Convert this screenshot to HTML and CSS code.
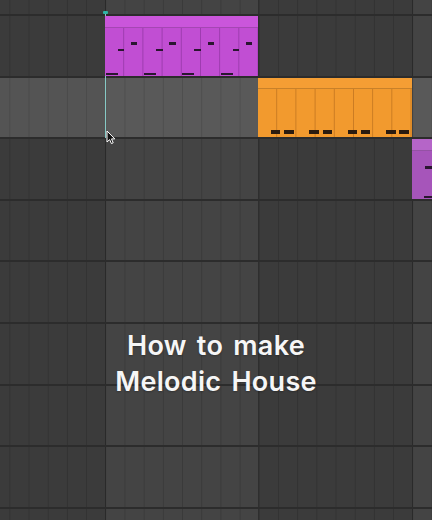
FILE: index.html
```html
<!DOCTYPE html>
<html lang="en">
<head>
    <meta charset="UTF-8">
    <meta name="viewport" content="width=device-width, initial-scale=1.0">
    <title>Melodic House</title>
    <link rel="stylesheet" href="styles.css">
</head>
<body>
    <main class="arrange">
        <div class="track track-top"></div>

        <div class="track">
            <div class="clip clip-purple slot-2">
                <div class="clip-head"></div>
                <div class="clip-body">
                    <div class="pair"><span class="note note-low"></span><span class="note note-mid"></span><span class="note note-high"></span></div>
                    <div class="pair"><span class="note note-low"></span><span class="note note-mid"></span><span class="note note-high"></span></div>
                    <div class="pair"><span class="note note-low"></span><span class="note note-mid"></span><span class="note note-high"></span></div>
                    <div class="pair"><span class="note note-low"></span><span class="note note-mid"></span><span class="note note-high"></span></div>
                </div>
            </div>
        </div>

        <div class="track track-selected">
            <div class="clip clip-orange slot-3">
                <div class="clip-head"></div>
                <div class="clip-body">
                    <div class="pair"><span class="note note-a"></span><span class="note note-b"></span></div>
                    <div class="pair"><span class="note note-a"></span><span class="note note-b"></span></div>
                    <div class="pair"><span class="note note-a"></span><span class="note note-b"></span></div>
                    <div class="pair"><span class="note note-a"></span><span class="note note-b"></span></div>
                </div>
            </div>
        </div>

        <div class="track">
            <div class="clip clip-violet slot-4">
                <div class="clip-head"></div>
                <div class="clip-body">
                    <div class="pair"><span class="note note-top"></span><span class="note note-foot"></span></div>
                </div>
            </div>
        </div>

        <div class="track"></div>
        <div class="track"></div>
        <div class="track"></div>
        <div class="track"></div>
        <div class="track"></div>
        <div class="track"></div>

        <!-- playhead + mouse pointer sit over the tracks -->
        <div class="playhead"></div>
        <div class="playhead-mark"></div>
        <svg class="pointer" width="10" height="15" viewBox="0 0 10 15">
            <path d="M1 1 L1 12 L3.6 9.6 L5.4 13.6 L7.2 12.8 L5.5 8.9 L8.8 8.9 Z" fill="#111" stroke="#fff" stroke-width="1" stroke-linejoin="round"/>
        </svg>

        <h1 class="title">How to make<br>Melodic House</h1>
    </main>
</body>
</html>
```

FILE: styles.css
```css
body {
    margin: 0;
    padding: 0;
    background-color: #3c3c3c;
    font-family: 'Inter', 'Liberation Sans', sans-serif;
}

.arrange {
    position: relative;
    width: 432px;
    height: 520px;
    overflow: hidden;
    display: flex;
    flex-direction: column;
}

/* one lane of the arrangement; beat lines every 19.19px, 2-bar shading */
.track {
    flex: none;
    height: 59.6px;
    border-bottom: 2px solid #2c2c2c;
    display: grid;
    grid-template-columns: 105.3px 153px 154px 1fr;
    background-image:
        linear-gradient(to right, rgba(0, 0, 0, 0.15) 0 1px, transparent 1px),
        linear-gradient(to right,
            #3b3b3b 0 104.8px, #2f2f2f 104.8px 105.8px,
            #444444 105.8px 257.8px, #2f2f2f 257.8px 258.8px,
            #3b3b3b 258.8px 411.8px, #2f2f2f 411.8px 412.8px,
            #444444 412.8px);
    background-size: 19.19px 100%, 100% 100%;
    background-position: 9.35px 0, 0 0;
    background-repeat: repeat-x, no-repeat;
}

.track-top {
    height: 14px;
}

.track-selected {
    background-image:
        linear-gradient(to right, rgba(0, 0, 0, 0.12) 0 1px, transparent 1px),
        linear-gradient(to right,
            #545454 0 104.8px, #4a4a4a 104.8px 105.8px,
            #595959 105.8px 257.8px, #4a4a4a 257.8px 258.8px,
            #545454 258.8px 411.8px, #4a4a4a 411.8px 412.8px,
            #595959 412.8px);
}

.slot-2 { grid-column: 2; }
.slot-3 { grid-column: 3; }
.slot-4 { grid-column: 4; }

.clip {
    position: relative;
    z-index: 2;
    display: flex;
    flex-direction: column;
}

.clip-head {
    height: 10.5px;
    border-bottom: 1px solid rgba(0, 0, 0, 0.18);
}

.clip-body {
    flex: 1;
    display: grid;
    grid-template-columns: repeat(4, 38.38px);
    background-size: 19.19px 100%;
    background-repeat: repeat-x;
}

.pair {
    position: relative;
}

.note {
    position: absolute;
    display: block;
}

.clip-purple .clip-head { background-color: #ca56db; }
.clip-purple .clip-body {
    background-color: #c14ed3;
    background-image: linear-gradient(to right, transparent 0 calc(100% - 1px), #9c3bae calc(100% - 1px));
}
.clip-purple .note { background-color: #2a1630; height: 2.4px; }
.note-low { left: 0.4px; bottom: 0.5px; width: 12px; }
.note-mid { left: 12.4px; top: 21.3px; width: 6.6px; }
.note-high { left: 25.7px; top: 14.7px; width: 6.3px; }

.clip-orange .clip-head { background-color: #f59e34; }
.clip-orange .clip-body {
    background-color: #f29a2e;
    background-image: linear-gradient(to right, transparent 0 calc(100% - 1px), #c97b22 calc(100% - 1px));
}
.clip-orange .note { background-color: #2b1c10; height: 4.2px; bottom: 3px; width: 9.3px; }
.note-a { left: 12.8px; }
.note-b { left: 26px; }

.clip-violet .clip-head { background-color: #b565c8; }
.clip-violet .clip-body { background-color: #a655ba; }
.clip-violet .note { background-color: #2a1630; height: 2.4px; }
.note-top { left: 12.6px; top: 15.5px; width: 8px; }
.note-foot { left: 11.6px; bottom: 0.5px; width: 9px; }

.playhead {
    position: absolute;
    z-index: 1;
    left: 105px;
    top: 12px;
    width: 1px;
    height: 126px;
    background-color: #86c9c5;
}

.playhead-mark {
    position: absolute;
    z-index: 3;
    left: 103px;
    top: 11px;
    width: 5px;
    height: 3px;
    border-radius: 1px;
    background-color: #2fb4a6;
}

.pointer {
    position: absolute;
    z-index: 4;
    left: 106px;
    top: 130px;
}

.title {
    position: absolute;
    z-index: 5;
    top: 328px;
    left: 0;
    right: 0;
    margin: 0;
    text-align: center;
    color: #f6f6f6;
    font-size: 27px;
    font-weight: 600;
    letter-spacing: 0.3px;
    word-spacing: 3px;
    line-height: 35.6px;
    text-shadow: 0 1px 2px rgba(0, 0, 0, 0.25);
}
```
